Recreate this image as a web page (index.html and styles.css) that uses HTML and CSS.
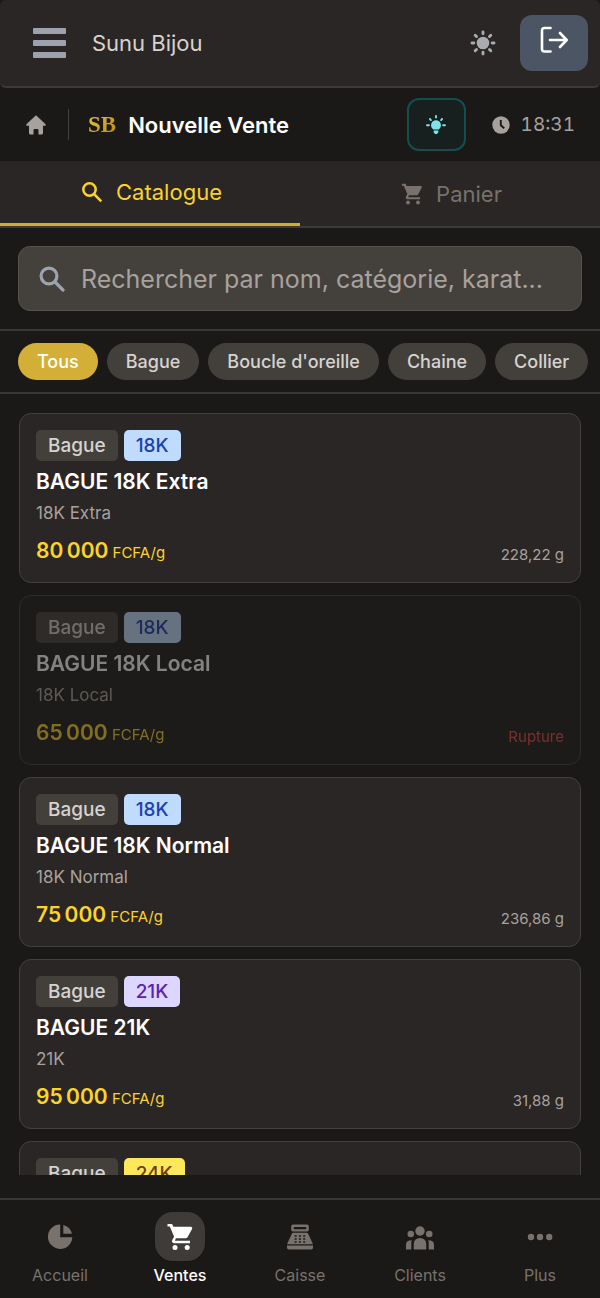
FILE: index.html
```html
<!doctype html>
<html lang="fr">
<head>
    <meta charset="UTF-8">
    <meta name="viewport" content="width=device-width, initial-scale=1.0">
    <title>Sunu Bijou - Nouvelle Vente</title>
    <link rel="stylesheet" href="styles.css">
</head>
<body>
    <header class="topbar">
        <button class="menu-btn" type="button" aria-label="Menu">
            <span></span><span></span><span></span>
        </button>
        <span class="brand">Sunu Bijou</span>
        <button class="theme-btn" type="button" aria-label="Changer de thème">
            <svg width="26" height="26" viewBox="0 0 26 26" fill="none" stroke="currentColor" stroke-width="2.9" stroke-linecap="round">
                <circle cx="13" cy="13" r="6.3" fill="currentColor" stroke="none"/>
                <path d="M13 2v1.800M13 22.200V24M2 13h1.800M22.200 13H24M5.200 5.200l1.300 1.300M19.500 19.500l1.300 1.300M5.200 20.800l1.300-1.300M19.500 6.500l1.300-1.300"/>
            </svg>
        </button>
        <button class="logout-btn" type="button" aria-label="Déconnexion">
            <svg width="28" height="28" viewBox="0 0 28 28" fill="none" stroke="currentColor" stroke-width="2.6" stroke-linecap="round" stroke-linejoin="round">
                <path d="M10.500 2H4.500Q2 2 2 4.500V23Q2 25.500 4.500 25.500H10.500M10 14H26.500M20 7l6.700 7L20 21"/>
            </svg>
        </button>
    </header>

    <div class="pagebar">
        <a class="home" href="#" aria-label="Accueil">
            <svg width="22" height="22" viewBox="0 0 22 22" fill="currentColor">
                <path d="M11 1.200L20.600 10.200Q21.200 11.800 19.800 11.800H18V19Q18 20.600 16.400 20.600H13.500V16.200Q13.500 15 12.300 15H9.700Q8.500 15 8.500 16.200V20.600H5.600Q4 20.600 4 19V11.800H2.200Q.8 11.800 1.400 10.200Z"/>
            </svg>
        </a>
        <span class="sep"></span>
        <span class="logo">SB</span>
        <h1>Nouvelle Vente</h1>
        <button class="tip-btn" type="button" aria-label="Aide">
            <svg width="22" height="22" viewBox="0 0 22 22" fill="none" stroke="currentColor" stroke-width="1.900" stroke-linecap="round">
                <path d="M11 6.200a5 5 0 0 1 2.600 9.200H8.400A5 5 0 0 1 11 6.200zM8.700 16.600h4.600v2q-2.300 3.400-4.600 0z" fill="currentColor" stroke="none"/>
                <path d="M11 2v1.600M2 11.200h1.900M18.100 11.200H20M4.900 4.900l1 1.200M17.100 4.900l-1 1.200"/>
            </svg>
        </button>
        <span class="clock">
            <svg width="18" height="18" viewBox="0 0 18 18">
                <circle cx="9" cy="9" r="8.700" fill="currentColor"/>
                <path d="M8.800 4v5.300l3.400 2.900" fill="none" stroke="#1c1917" stroke-width="1.900"/>
            </svg>
            <time>18:31</time>
        </span>
    </div>

    <nav class="tabs">
        <button class="tab active" type="button">
            <svg width="22" height="22" viewBox="0 0 22 22" fill="none" stroke="currentColor" stroke-width="2.500">
                <circle cx="8.500" cy="8.500" r="6.200"/>
                <path d="M13 13l7.300 7.300"/>
            </svg>
            Catalogue
        </button>
        <button class="tab" type="button">
            <svg width="22" height="22" viewBox="0 0 22 22" fill="currentColor">
                <path d="M1 .8h3.600l1 2.200H20q1.200.2.800 1.500l-3.600 6.800q-.6 1-1.700 1H8l-.9 1.900H19v2H6.300q-2.400-.5-1.300-2.800l1.300-2.400L2.800 2.800H1z"/>
                <circle cx="7" cy="19.400" r="2"/>
                <circle cx="17" cy="19.400" r="2"/>
            </svg>
            Panier
        </button>
    </nav>

    <div class="search">
        <label class="search-box">
            <svg width="26" height="26" viewBox="0 0 26 26" fill="none" stroke="currentColor" stroke-width="3.200" stroke-linecap="round">
                <circle cx="10" cy="10" r="7.900"/>
                <path d="M16 16l8 8"/>
            </svg>
            <input type="text" aria-label="Rechercher" placeholder="Rechercher par nom, catégorie, karat...">
        </label>
    </div>

    <div class="chips">
        <button class="chip active" type="button">Tous</button>
        <button class="chip" type="button">Bague</button>
        <button class="chip" type="button">Boucle d'oreille</button>
        <button class="chip" type="button">Chaine</button>
        <button class="chip" type="button">Collier</button>
    </div>

    <main class="list">
        <button class="product" type="button">
            <span class="tags"><span class="tag">Bague</span><span class="tag k18">18K</span></span>
            <span class="name">BAGUE 18K Extra</span>
            <span class="desc">18K Extra</span>
            <span class="foot">
                <span class="price"><b>80&#8239;000</b> FCFA/g</span>
                <span class="stock">228,22 g</span>
            </span>
        </button>
        <button class="product" type="button" disabled>
            <span class="tags"><span class="tag">Bague</span><span class="tag k18">18K</span></span>
            <span class="name">BAGUE 18K Local</span>
            <span class="desc">18K Local</span>
            <span class="foot">
                <span class="price"><b>65&#8239;000</b> FCFA/g</span>
                <span class="stock out">Rupture</span>
            </span>
        </button>
        <button class="product" type="button">
            <span class="tags"><span class="tag">Bague</span><span class="tag k18">18K</span></span>
            <span class="name">BAGUE 18K Normal</span>
            <span class="desc">18K Normal</span>
            <span class="foot">
                <span class="price"><b>75&#8239;000</b> FCFA/g</span>
                <span class="stock">236,86 g</span>
            </span>
        </button>
        <button class="product" type="button">
            <span class="tags"><span class="tag">Bague</span><span class="tag k21">21K</span></span>
            <span class="name">BAGUE 21K</span>
            <span class="desc">21K</span>
            <span class="foot">
                <span class="price"><b>95&#8239;000</b> FCFA/g</span>
                <span class="stock">31,88 g</span>
            </span>
        </button>
        <button class="product" type="button">
            <span class="tags"><span class="tag">Bague</span><span class="tag k24">24K</span></span>
        </button>
    </main>

    <nav class="bottom-nav">
        <a href="#">
            <span class="nav-icon">
                <svg width="28" height="28" viewBox="0 0 28 28" fill="currentColor">
                    <path d="M14.200 1.500V14.200H26.300A12.200 12.200 0 1 1 14.200 1.500z"/>
                    <path d="M17.300 2A12 12 0 0 1 25.900 10.700H17.300z"/>
                </svg>
            </span>
            Accueil
        </a>
        <a class="active" href="#">
            <span class="nav-icon">
                <svg width="28" height="28" viewBox="0 0 28 28" fill="currentColor">
                    <path d="M1.500 1h4.600l1.300 2.800H25q1.700.3 1.200 2l-4.500 8.200q-.8 1.300-2.200 1.300H10l-1.200 2.400H24v2.600H8q-3-.7-1.600-3.600l1.700-3L3.800 3.600H1.500z"/>
                    <circle cx="9" cy="24.600" r="2.500"/>
                    <circle cx="21.200" cy="24.600" r="2.500"/>
                </svg>
            </span>
            Ventes
        </a>
        <a href="#">
            <span class="nav-icon">
                <svg width="28" height="28" viewBox="0 0 28 28" fill="currentColor" fill-rule="evenodd">
                    <path d="M7 1.500h14q1.800 0 1.800 1.800v3.400q0 1.800-1.800 1.800H7q-1.800 0-1.800-1.800V3.300Q5.200 1.500 7 1.500zM7.800 4v2.200h12.400V4zM7.500 9.800h13q1.300 0 1.800 1.300L27 21.300H1L5.700 11.100Q6.200 9.800 7.500 9.800z"/>
                    <path d="M1 22.500h26V24.700Q27 26.500 25.200 26.500H2.800Q1 26.500 1 24.700z"/>
                    <path d="M8.600 13h2M12.900 13h2M17.200 13h2M8.600 16h2M12.900 16h2M17.200 16h2M8.600 19h2M12.900 19h2M17.200 19h2" stroke="#1b1917" stroke-width="1.600"/>
                </svg>
            </span>
            Caisse
        </a>
        <a href="#">
            <span class="nav-icon">
                <svg width="30" height="28" viewBox="0 0 30 28" fill="currentColor">
                    <circle cx="15" cy="8" r="4.700"/>
                    <circle cx="5.800" cy="11" r="3.300"/>
                    <circle cx="24.200" cy="11" r="3.300"/>
                    <path d="M8.800 26.500V20.500A6.200 5.500 0 0 1 21.200 20.500V26.500zM1 26.500V21.500Q1 17.200 6.800 17.200Q6.300 18.500 6.300 20.500V26.500zM29 26.500V21.500Q29 17.200 23.200 17.200Q23.700 18.500 23.700 20.500V26.500z"/>
                </svg>
            </span>
            Clients
        </a>
        <a href="#">
            <span class="nav-icon">
                <svg width="28" height="28" viewBox="0 0 28 28" fill="currentColor">
                    <circle cx="5" cy="14" r="3.200"/>
                    <circle cx="14" cy="14" r="3.200"/>
                    <circle cx="23.200" cy="14" r="3.200"/>
                </svg>
            </span>
            Plus
        </a>
    </nav>
</body>
</html>
```
FILE: styles.css
```css
*{
    box-sizing: border-box;
    margin: 0;
    padding: 0;
}
body{
    display: flex;
    flex-direction: column;
    height: 100vh;
    overflow: hidden;
    background: #1b1917;
    color: #d6d3d1;
    font-family: Inter, "Liberation Sans", sans-serif;
}
button{
    border: 0;
    background: none;
    color: inherit;
    font: inherit;
    cursor: pointer;
}
a{
    color: inherit;
    text-decoration: none;
}
svg{
    display: block;
    flex: none;
}

/* barre du haut */
.topbar{
    display: flex;
    align-items: center;
    flex: none;
    height: 88px;
    padding: 0 12px 0 33px;
    background: #2a2625;
    border-bottom: 2px solid #3d3937;
    border-radius: 6px;
}
.menu-btn{
    display: flex;
    flex-direction: column;
    gap: 6px;
    width: 33px;
}
.menu-btn span{
    height: 6px;
    border-radius: 1px;
    background: #9ca3af;
}
.brand{
    flex: 1;
    margin-left: 26px;
    font-size: 22px;
}
.theme-btn{
    color: #a9abae;
}
.logout-btn{
    display: flex;
    justify-content: center;
    width: 68px;
    height: 56px;
    margin-left: 24px;
    padding-top: 11px;
    border-radius: 12px;
    background: #4b5563;
    color: #fff;
}

/* titre de page */
.pagebar{
    display: flex;
    align-items: center;
    flex: none;
    height: 73px;
    padding: 0 25px;
}
.home{
    color: #a8a29e;
}
.sep{
    width: 1px;
    height: 31px;
    margin: 0 19px 0 21px;
    background: #44403c;
}
.logo{
    font-family: "Liberation Serif", serif;
    font-size: 23px;
    font-weight: bold;
    background: linear-gradient(135deg, #e9c93f, #b8860b);
    -webkit-background-clip: text;
    background-clip: text;
    color: transparent;
}
h1{
    flex: 1;
    margin-left: 12px;
    color: #fff;
    font-size: 22px;
    font-weight: 600;
}
.tip-btn{
    display: flex;
    align-items: center;
    justify-content: center;
    width: 59px;
    height: 53px;
    border: 2px solid #134e50;
    border-radius: 12px;
    background: #18201f;
    color: #7de3ea;
}
.clock{
    display: flex;
    align-items: center;
    gap: 11px;
    margin-left: 26px;
    color: #a8a29e;
    font-size: 19px;
    font-variant-numeric: tabular-nums;
}

/* onglets */
.tabs{
    display: flex;
    flex: none;
    height: 67px;
    background: #2a2625;
    border-bottom: 2px solid #3e3a37;
}
.tab{
    display: flex;
    flex: 1;
    align-items: center;
    justify-content: center;
    gap: 13px;
    padding-left: 3px;
    color: #78716c;
    font-size: 22px;
}
.tab.active{
    border-bottom: 3px solid #cfab37;
    color: #fcd328;
}

/* recherche */
.search{
    flex: none;
    padding: 18px;
    border-bottom: 2px solid #393633;
}
.search-box{
    display: flex;
    align-items: center;
    gap: 16px;
    height: 65px;
    padding: 0 20px;
    border: 1px solid #57534e;
    border-radius: 12px;
    background: #44403c;
    color: #9ca3af;
}
.search-box input{
    flex: 1;
    min-width: 0;
    border: 0;
    outline: 0;
    background: none;
    color: #fff;
    font: inherit;
    font-size: 25px;
}
.search-box input::placeholder{
    color: #a8a29e;
}

/* filtres */
.chips{
    display: flex;
    flex: none;
    gap: 9px;
    padding: 12px 18px;
    border-bottom: 2px solid #393633;
    overflow: hidden;
}
.chip{
    flex: none;
    height: 37px;
    padding: 0 19px;
    border-radius: 20px;
    background: #43403c;
    font-size: 18px;
    font-weight: 500;
}
.chip.active{
    background: #d4af37;
    color: #fff;
}

/* liste des produits */
.list{
    display: flex;
    flex: 1;
    flex-direction: column;
    gap: 12px;
    min-height: 0;
    padding: 19px 19px 0;
    margin-bottom: 23px;
    overflow: hidden;
}
.product{
    display: flex;
    flex: none;
    flex-direction: column;
    min-height: 170px;
    padding: 16px 16px 14px;
    border: 1px solid #44403c;
    border-radius: 12px;
    background: #2a2625;
    text-align: left;
}
.product:disabled{
    border-color: #2f2c2a;
    background: #1d1b19;
}
.product:disabled > span{
    opacity: .45;
}
.tags{
    display: flex;
    gap: 6px;
}
.tag{
    height: 31px;
    padding: 0 12px;
    border-radius: 5px;
    background: #43403c;
    font-size: 19px;
    font-weight: 500;
    line-height: 31px;
}
.k18{
    background: #bfdbfe;
    color: #1e40af;
}
.k21{
    background: #ddd6fe;
    color: #5b21b6;
}
.k24{
    background: #fde859;
    color: #713f12;
}
.name{
    margin-top: 6px;
    color: #fff;
    font-size: 21px;
    font-weight: 600;
    line-height: 30px;
}
.desc{
    margin-top: 4px;
    color: #a8a29e;
    font-size: 17px;
    line-height: 24px;
}
.foot{
    display: flex;
    align-items: flex-end;
    justify-content: space-between;
    margin-top: 12px;
}
.price{
    color: #fcd328;
    font-size: 15px;
    line-height: 28px;
}
.price b{
    font-size: 21px;
    font-weight: 600;
}
.stock{
    color: #a8a29e;
    font-size: 15px;
    line-height: 24px;
}
.stock.out{
    color: #ef4444;
}

/* navigation du bas */
.bottom-nav{
    display: flex;
    flex: none;
    height: 100px;
    padding-top: 12px;
    border-top: 2px solid #393633;
}
.bottom-nav a{
    display: flex;
    flex: 1;
    flex-direction: column;
    align-items: center;
    gap: 4px;
    color: #78716c;
    font-size: 16px;
    line-height: 20px;
}
.nav-icon{
    display: flex;
    align-items: center;
    justify-content: center;
    width: 50px;
    height: 49px;
    border-radius: 18px;
}
.bottom-nav .active{
    color: #fff;
    font-weight: 500;
}
.active .nav-icon{
    background: #3f3b38;
}
```
